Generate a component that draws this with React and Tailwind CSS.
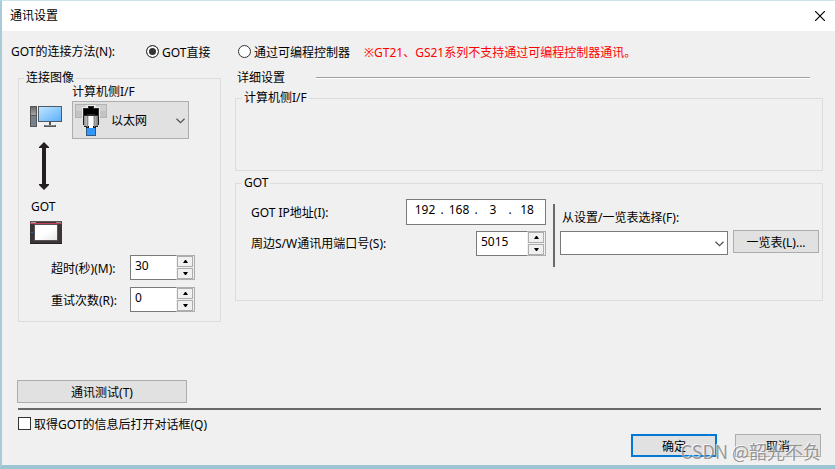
import React, { useState } from "react";
import clsx from "clsx";

function ComputerIcon() {
  return (
    <svg width="32" height="21" viewBox="0 0 32 21" shapeRendering="crispEdges" aria-hidden="true">
      <defs>
        <linearGradient id="screen" x1="0" y1="0" x2="1" y2="1">
          <stop offset="0" stopColor="#bfe6ff" />
          <stop offset="1" stopColor="#5cb0fb" />
        </linearGradient>
        <linearGradient id="tower" x1="0" y1="0" x2="0" y2="1">
          <stop offset="0" stopColor="#6b6b6b" />
          <stop offset="1" stopColor="#a5a5a5" />
        </linearGradient>
      </defs>
      <rect x="0" y="0" width="7" height="21" fill="#55565a" />
      <rect x="1" y="1" width="5" height="8" fill="url(#tower)" />
      <rect x="1" y="10" width="5" height="10" fill="#77828a" />
      <rect x="8" y="0" width="24" height="16" fill="#4f5a66" />
      <rect x="9" y="1" width="22" height="14" fill="url(#screen)" />
      <rect x="19" y="16" width="2" height="3" fill="#4f5256" />
      <rect x="14" y="19" width="12" height="2" fill="#55595d" />
      <rect x="15" y="19" width="10" height="1" fill="#84898d" />
    </svg>
  );
}

function EthernetIcon() {
  return (
    <svg width="32" height="33" viewBox="0 0 32 33" shapeRendering="crispEdges" aria-hidden="true">
      <defs>
        <linearGradient id="plug" x1="0" y1="0" x2="1" y2="0">
          <stop offset="0" stopColor="#8d8d8d" />
          <stop offset="0.3" stopColor="#d6d6d6" />
          <stop offset="0.7" stopColor="#c8c8c8" />
          <stop offset="1" stopColor="#777777" />
        </linearGradient>
      </defs>
      <rect x="0.5" y="0.5" width="31" height="13" fill="#cfcfcf" stroke="#b3b3b3" />
      <rect x="1" y="7" width="30" height="6" fill="#c3c3c3" />
      <path d="M11 1h10v2h4v11h-2v10h-14v-10h-2v-11h4z" fill="#ebebeb" />
      <path d="M8 4h5v-2h6v2h5v8h-16z" fill="#2b2b2b" />
      <path d="M9 5h5v-2h4v2h5v6h-3v-1h-8v1h-3z" fill="#000000" />
      <path d="M8 12h16v9h-1v2h-2v1h-10v-1h-2v-2h-1z" fill="#1c1c1c" />
      <rect x="9" y="12" width="14" height="10" fill="url(#plug)" />
      <rect x="12" y="12" width="1" height="11" fill="#8a8a8a" />
      <rect x="19" y="12" width="1" height="11" fill="#8a8a8a" />
      <rect x="14" y="12" width="4" height="12" fill="#ffffff" />
      <rect x="11" y="24" width="10" height="8" fill="#31587f" />
      <rect x="12" y="24" width="8" height="7" fill="#3296fb" />
    </svg>
  );
}

function LinkArrow() {
  return (
    <svg width="10" height="48" viewBox="0 0 10 48" className="mt-[3px] ml-[9px] block" aria-hidden="true">
      <path d="M5 0 L10 5 V6 H7 V42 H10 V43 L5 48 L0 43 V42 H3 V6 H0 V5 Z" fill="#231f20" />
    </svg>
  );
}

function TerminalIcon() {
  return (
    <svg width="32" height="23" viewBox="0 0 32 23" shapeRendering="crispEdges" className="mt-1.5 block" aria-hidden="true">
      <defs>
        <linearGradient id="panel" x1="0" y1="0" x2="1" y2="1">
          <stop offset="0.5" stopColor="#ffffff" />
          <stop offset="1" stopColor="#e8e8e8" />
        </linearGradient>
      </defs>
      <rect width="32" height="23" fill="#3b3536" />
      <rect width="32" height="1" fill="#5d5758" />
      <rect x="1" y="1" width="5" height="1" fill="#a9a5a6" />
      <rect x="26" y="1" width="5" height="1" fill="#8b8687" />
      <rect y="2" width="32" height="1" fill="#c8405c" />
      <rect x="4" y="3" width="24" height="17" fill="#575253" />
      <rect x="5" y="4" width="22" height="15" fill="url(#panel)" />
      <rect x="1" y="11" width="2" height="1" fill="#2f62a8" />
      <rect y="22" width="32" height="1" fill="#252122" />
    </svg>
  );
}

function Chevron({ className }) {
  return (
    <svg
      width="9"
      height="6"
      viewBox="0 0 9 6"
      fill="none"
      stroke="#555555"
      strokeWidth="1.3"
      className={clsx("pointer-events-none absolute", className)}
      aria-hidden="true"
    >
      <path d="M0.5 0.7 L4.5 4.7 L8.5 0.7" />
    </svg>
  );
}

function StepButton({ label, path, onClick }) {
  return (
    <button
      type="button"
      aria-label={label}
      onClick={onClick}
      className="flex h-[11px] w-4 items-center justify-center border border-[#adadad] bg-[#f0f0f0]"
    >
      <svg width="5" height="3" viewBox="0 0 5 3" aria-hidden="true">
        <path d={path} fill="#000000" />
      </svg>
    </button>
  );
}

function SpinBox({ id, initial, className }) {
  const [value, setValue] = useState(initial);
  return (
    <div className={clsx("flex h-[25px] border border-[#7a7a7a] bg-white", className)}>
      <input
        id={id}
        value={value}
        onChange={(e) => setValue(e.target.value)}
        className="min-w-0 flex-1 bg-transparent pb-1 pl-1 outline-none"
      />
      <div className="-my-px -mr-px flex flex-col justify-center gap-px border border-l-0 border-[#adadad] bg-[#f0f0f0] px-px">
        <StepButton label="+" path="M0 3 L2 0 H3 L5 3 Z" onClick={() => setValue(String(Number(value) + 1))} />
        <StepButton label="-" path="M0 0 H5 L3 3 H2 Z" onClick={() => setValue(String(Number(value) - 1))} />
      </div>
    </div>
  );
}

function Group({ title, className, children }) {
  return (
    <fieldset className={clsx("min-w-0 border border-[#dcdcdc]", className)}>
      <legend className="px-0.5 leading-4">{title}</legend>
      {children}
    </fieldset>
  );
}

function Radio({ label, className, ...props }) {
  return (
    <label className={clsx("flex shrink-0 items-center gap-[3px]", className)}>
      <input
        type="radio"
        name="method"
        className="size-[13px] appearance-none rounded-full border border-[#333333] bg-white checked:bg-[#333333] checked:shadow-[inset_0_0_0_2px_white]"
        {...props}
      />
      <span className="pt-0.5">{label}</span>
    </label>
  );
}

function Button({ className, children }) {
  return (
    <button
      type="button"
      className={clsx("flex h-[23px] shrink-0 items-center justify-center bg-[#e1e1e1] pt-0.5", className)}
    >
      {children}
    </button>
  );
}

export default function App() {
  return (
    <div className="relative flex min-h-screen flex-col border-t border-b-4 border-l-2 border-t-[#cde3ea] border-b-[#9cc5d3] border-l-[#a9cbd8] bg-[#f0f0f0] font-['Noto_Sans','Noto_Sans_CJK_SC',sans-serif] text-[12px] leading-4 whitespace-nowrap text-black">
      <header className="flex h-[30px] items-center justify-between bg-white pr-2.5 pl-2">
        <h1>通讯设置</h1>
        <button type="button" aria-label="关闭">
          <svg width="10" height="10" viewBox="0 0 10 10" stroke="#000000" strokeWidth="1.2" aria-hidden="true">
            <path d="M0 0 L10 10 M10 0 L0 10" />
          </svg>
        </button>
      </header>

      <div className="flex h-[39px] items-center pt-0.5 pl-[9px]" role="radiogroup" aria-labelledby="method-label">
        <span id="method-label" className="w-[135px] shrink-0">
          GOT的连接方法(N):
        </span>
        <Radio label="GOT直接" className="w-[92px]" defaultChecked />
        <Radio label="通过可编程控制器" className="w-[126px]" />
        <span className="pt-0.5 text-[#ff0000]">※GT21、GS21系列不支持通过可编程控制器通讯。</span>
      </div>

      <main className="flex items-start gap-3.5 pr-3 pl-4">
        <Group title="连接图像" className="w-[203px] shrink-0 px-[5px] pb-[9px]">
          <div className="pl-1.5">
            <div className="flex items-end gap-2.5">
              <div className="pb-3">
                <ComputerIcon />
              </div>
              <div>
                <label htmlFor="pc-interface" className="mb-[3px] block leading-3">
                  计算机侧I/F
                </label>
                <div className="relative">
                  <select
                    id="pc-interface"
                    className="block h-[38px] w-[117px] appearance-none border border-[#adadad] bg-[#e1e1e1] pt-0.5 pl-[38px]"
                  >
                    <option>以太网</option>
                  </select>
                  <span className="pointer-events-none absolute top-[3px] left-[3px]">
                    <EthernetIcon />
                  </span>
                  <Chevron className="top-[17px] right-1" />
                </div>
              </div>
            </div>
            <LinkArrow />
            <p className="mt-[9px] pl-px">GOT</p>
            <TerminalIcon />
            <div className="mt-[11px] flex flex-col gap-[7px] pl-[21px]">
              <div className="flex items-center gap-2.5">
                <label htmlFor="timeout" className="w-[69px] pt-0.5">
                  超时(秒)(M):
                </label>
                <SpinBox id="timeout" initial="30" className="w-[65px]" />
              </div>
              <div className="flex items-center gap-2.5">
                <label htmlFor="retries" className="w-[69px] pt-0.5">
                  重试次数(R):
                </label>
                <SpinBox id="retries" initial="0" className="w-[65px]" />
              </div>
            </div>
          </div>
        </Group>

        <section className="flex min-w-0 flex-1 flex-col gap-1">
          <div className="flex items-center gap-[31px] pr-[13px] pl-0.5">
            <h2>详细设置</h2>
            <div className="h-0.5 flex-1 border-t border-b border-t-[#a0a0a0] border-b-white" />
          </div>
          <Group title="计算机侧I/F" className="h-[81px] px-1.5" />
          <Group title="GOT" className="h-[126px] px-1.5">
            <div className="flex pt-2 pl-[9px]">
              <div className="flex w-[295px] shrink-0 flex-col gap-1.5">
                <div className="flex items-center justify-between">
                  <label htmlFor="ip-1" className="pt-0.5">
                    GOT IP地址(I):
                  </label>
                  <div className="flex h-[26px] w-[140px] items-center border border-[#7a7a7a] bg-white px-[3px] pb-1">
                    <input id="ip-1" defaultValue="192" className="w-[30px] text-center outline-none" />
                    <span className="w-1 text-center">.</span>
                    <input aria-label="IP 2" defaultValue="168" className="w-[30px] text-center outline-none" />
                    <span className="w-1 text-center">.</span>
                    <input aria-label="IP 3" defaultValue="3" className="w-[30px] text-center outline-none" />
                    <span className="w-1 text-center">.</span>
                    <input aria-label="IP 4" defaultValue="18" className="w-[30px] text-center outline-none" />
                  </div>
                </div>
                <div className="flex items-center justify-between">
                  <label htmlFor="port">周边S/W通讯用端口号(S):</label>
                  <SpinBox id="port" initial="5015" className="w-[70px]" />
                </div>
              </div>
              <div className="mt-[5px] ml-[7px] h-[63px] w-0.5 bg-[#696969]" />
              <div className="-mr-[3px] ml-[5px] min-w-0 flex-1 pt-[11px]">
                <label htmlFor="saved" className="mb-1 block pl-0.5">
                  从设置/一览表选择(F):
                </label>
                <div className="flex gap-[5px]">
                  <div className="relative mt-px min-w-0 flex-1">
                    <select
                      id="saved"
                      className="block h-6 w-full appearance-none border border-[#7a7a7a] bg-white px-1"
                    >
                      <option></option>
                    </select>
                    <Chevron className="top-2.5 right-1" />
                  </div>
                  <Button className="w-[86px] border border-[#adadad]">一览表(L)...</Button>
                </div>
              </div>
            </div>
          </Group>
        </section>
      </main>

      <footer className="mt-[58px] pr-3.5 pb-2 pl-[15px]">
        <Button className="w-[170px] border border-[#adadad]">通讯测试(T)</Button>
        <hr className="mt-[5px] ml-px border-0 bg-[#696969] pt-0.5" />
        <label className="mt-[5px] flex w-fit items-center gap-[3px] pl-px">
          <input
            type="checkbox"
            className="mb-px size-[13px] appearance-none border border-[#333333] bg-white checked:bg-[#333333]"
          />
          <span className="pt-0.5">取得GOT的信息后打开对话框(Q)</span>
        </label>
        <div className="mt-px flex justify-end gap-[18px]">
          <Button className="w-[86px] border-2 border-[#0078d7]">确定</Button>
          <Button className="w-[86px] border border-[#adadad]">取消</Button>
        </div>
      </footer>

      <span className="pointer-events-none absolute right-3.5 bottom-0 font-['Noto_Sans_CJK_SC',sans-serif] text-[18px] leading-7 text-[#808080]/80 [text-shadow:-1px_-1px_0_#ffffffb0]">
        CSDN @韶光不负
      </span>
    </div>
  );
}
